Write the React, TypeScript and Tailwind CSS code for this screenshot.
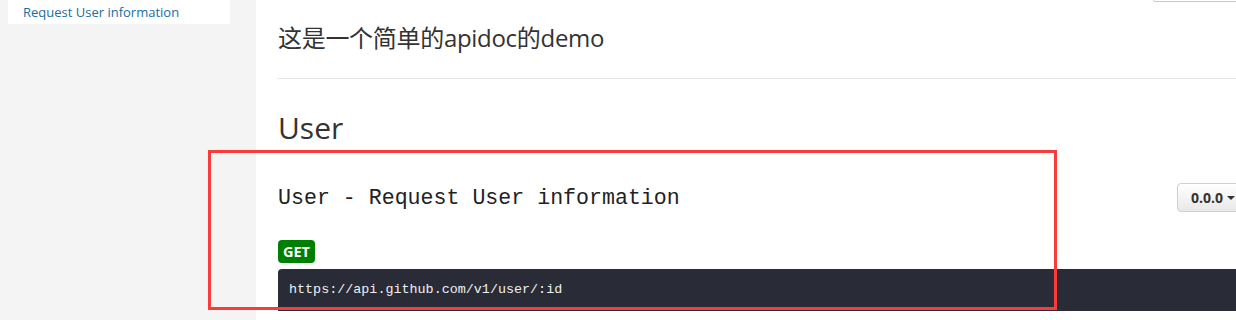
import React from "react";

const sans = "font-['Open_Sans','Noto_Sans_CJK_SC',sans-serif]";

export default function App() {
  return (
    <div className={`relative flex w-[1236px] h-[320px] overflow-hidden bg-white ${sans}`}>
      <aside className="w-[256px] shrink-0 bg-[#f4f4f4]">
        <div className="ml-[8px] w-[222px] h-[24px] bg-white pl-[15px] text-[13px] leading-[24px] text-[#1a6ea0]">
          Request User information
        </div>
      </aside>

      <main className="w-[994px] shrink-0 pl-[22px]">
        <div className="flex justify-end">
          <div className="w-[97px] h-[2px] border-x border-b border-[#c8c8c8] rounded-b-[3px]" />
        </div>

        <p className="mt-[20px] text-[24px] leading-[32px] tracking-[-0.3px] text-[#333]">
          这是一个简单的apidoc的demo
        </p>

        <div className="mt-[24px] h-px bg-[#e5e5e5]" />

        <h2 className="mt-[31px] text-[30px] font-medium leading-[36px] text-[#333]">User</h2>

        <div className="mt-[37px] flex h-[29px] items-center justify-between">
          <h3 className="pt-px font-['Liberation_Mono',monospace] text-[21.6px] leading-[29px] text-[#222]">
            User - Request User information
          </h3>
          <button className="flex h-[29px] items-center gap-[4px] rounded-[4px] border border-[#cfcfcf] bg-gradient-to-b from-white to-[#e8e8e8] pl-[13px] pr-[14px] text-[14px] font-bold text-[#333]">
            0.0.0
            <span className="inline-block border-x-[4px] border-t-[4px] border-x-transparent border-t-[#333]" />
          </button>
        </div>

        <div className="mt-[28px] flex">
          <span className="flex h-[23px] items-center rounded-[4px] bg-[#008000] px-[5px] text-[14.5px] font-bold text-white">
            GET
          </span>
        </div>

        <div className="mt-[6px] flex h-[42px] items-center rounded-tl-[4px] bg-[#292b36] pl-[11px]">
          <code className="font-['Liberation_Mono',monospace] text-[13.4px] text-[#f0f0f0]">
            https://api.github.com/v1/user/:id
          </code>
        </div>
      </main>

      <div className="pointer-events-none absolute left-[208px] top-[150px] h-[160px] w-[849px] border-[3px] border-[#fa3b3c]" />
    </div>
  );
}
